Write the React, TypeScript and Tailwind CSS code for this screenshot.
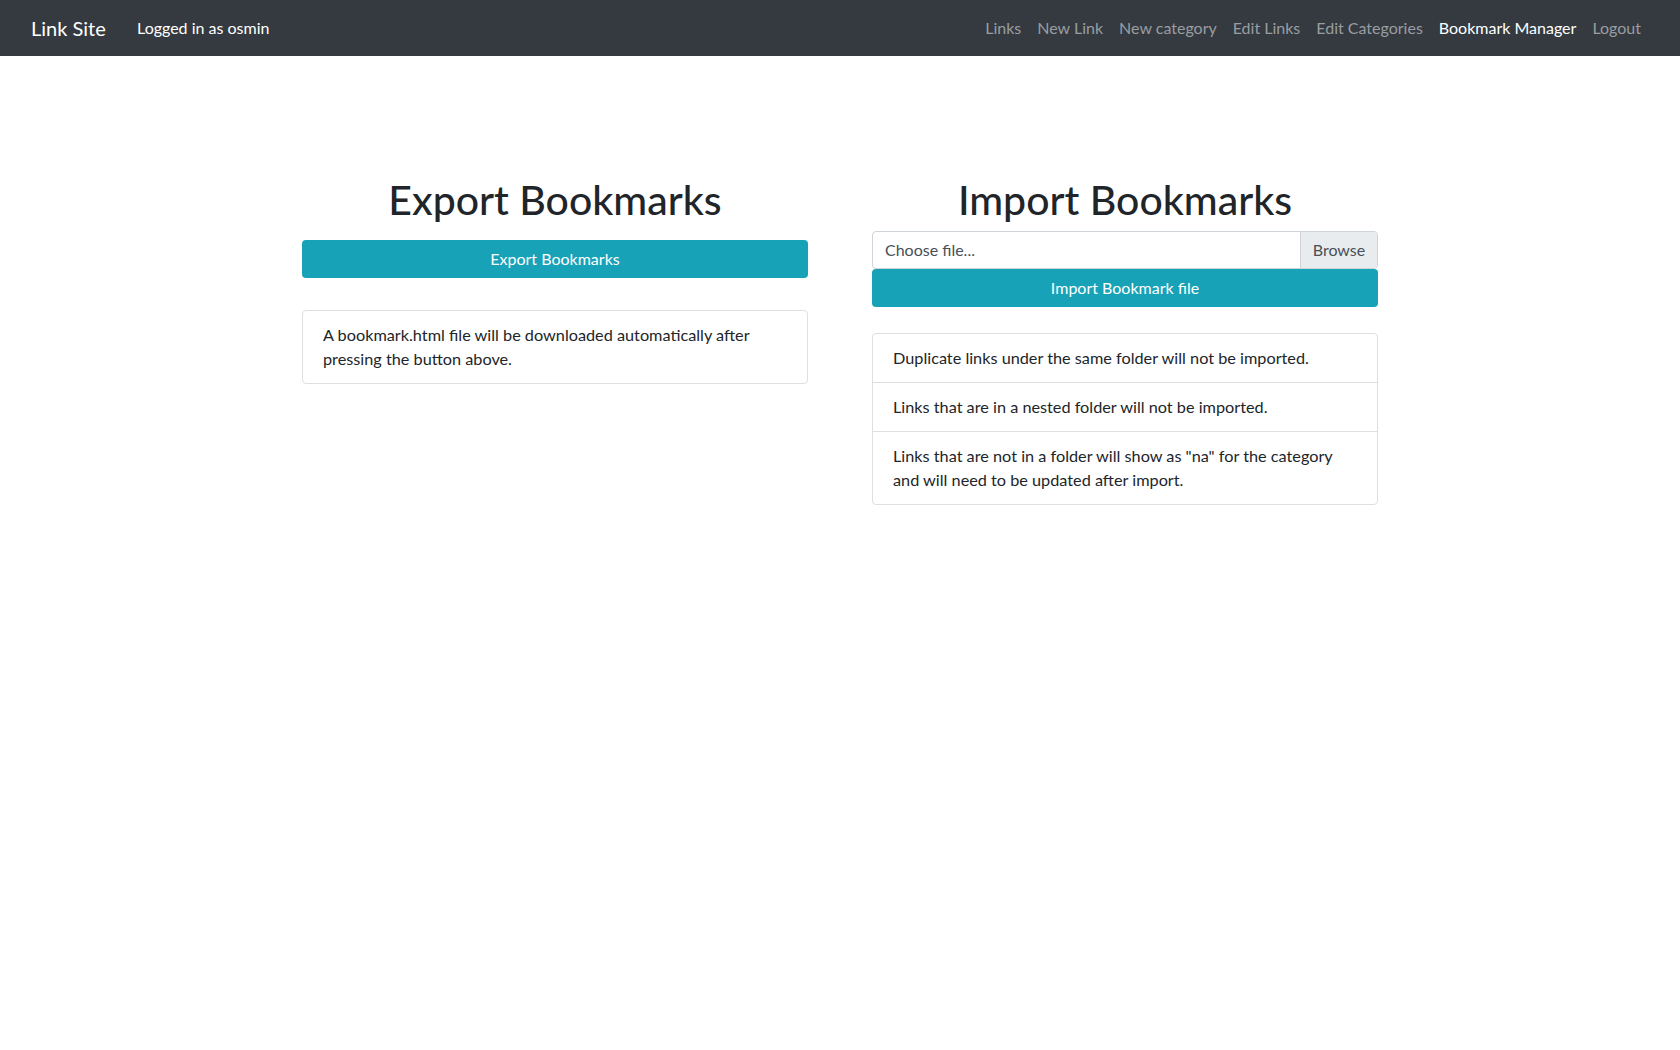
import React from "react";

const font = { fontFamily: "Lato, 'Noto Sans', sans-serif" };

export default function App() {
  const links = ["Links", "New Link", "New category", "Edit Links", "Edit Categories", "Bookmark Manager", "Logout"];
  return (
    <div className="min-h-screen bg-white text-[#212529]" style={font}>
      <nav className="h-14 bg-[#343a40] flex items-center pl-[31px] pr-[31px]">
        <span className="text-[20px] text-white leading-[30px] w-[106px]">Link Site</span>
        <span className="text-[16px] text-white">Logged in as osmin</span>
        <div className="ml-auto flex">
          {links.map((l) => (
            <a
              key={l}
              className={
                "px-2 text-[16px] leading-6 " +
                (l === "Bookmark Manager" ? "text-white" : "text-[#9a9da0]")
              }
            >
              {l}
            </a>
          ))}
        </div>
      </nav>
      <main className="flex justify-center gap-16 pt-[120px]">
        <section className="w-[506px] flex flex-col">
          <h1 className="text-[41px] leading-[48px] font-medium text-center">Export Bookmarks</h1>
          <button className="mt-4 h-[38px] w-full rounded bg-[#17a2b8] text-white text-[16px]">
            Export Bookmarks
          </button>
          <div className="mt-[32px] border border-[#dfdfdf] rounded px-5 py-3 text-[16.25px] leading-6">
            A bookmark.html file will be downloaded automatically after pressing the button above.
          </div>
        </section>
        <section className="w-[506px] flex flex-col">
          <h1 className="text-[41px] leading-[48px] font-medium text-center">Import Bookmarks</h1>
          <div className="mt-[7px] h-[38px] flex border border-[#ced4da] rounded overflow-hidden text-[16px]">
            <div className="flex-1 flex items-center px-3 text-[#495057]">Choose file...</div>
            <div className="w-[77px] flex items-center justify-center bg-[#e9ecef] border-l border-[#ced4da] text-[#495057]">
              Browse
            </div>
          </div>
          <button className="h-[38px] w-full rounded bg-[#17a2b8] text-white text-[16px]">
            Import Bookmark file
          </button>
          <ul className="mt-[26px] border border-[#dfdfdf] rounded text-[16.25px] leading-6">
            <li className="px-5 py-3 border-b border-[#dfdfdf]">
              Duplicate links under the same folder will not be imported.
            </li>
            <li className="px-5 py-3 border-b border-[#dfdfdf]">
              Links that are in a nested folder will not be imported.
            </li>
            <li className="px-5 py-3">
              Links that are not in a folder will show as "na" for the category and will need to be updated after import.
            </li>
          </ul>
        </section>
      </main>
    </div>
  );
}
